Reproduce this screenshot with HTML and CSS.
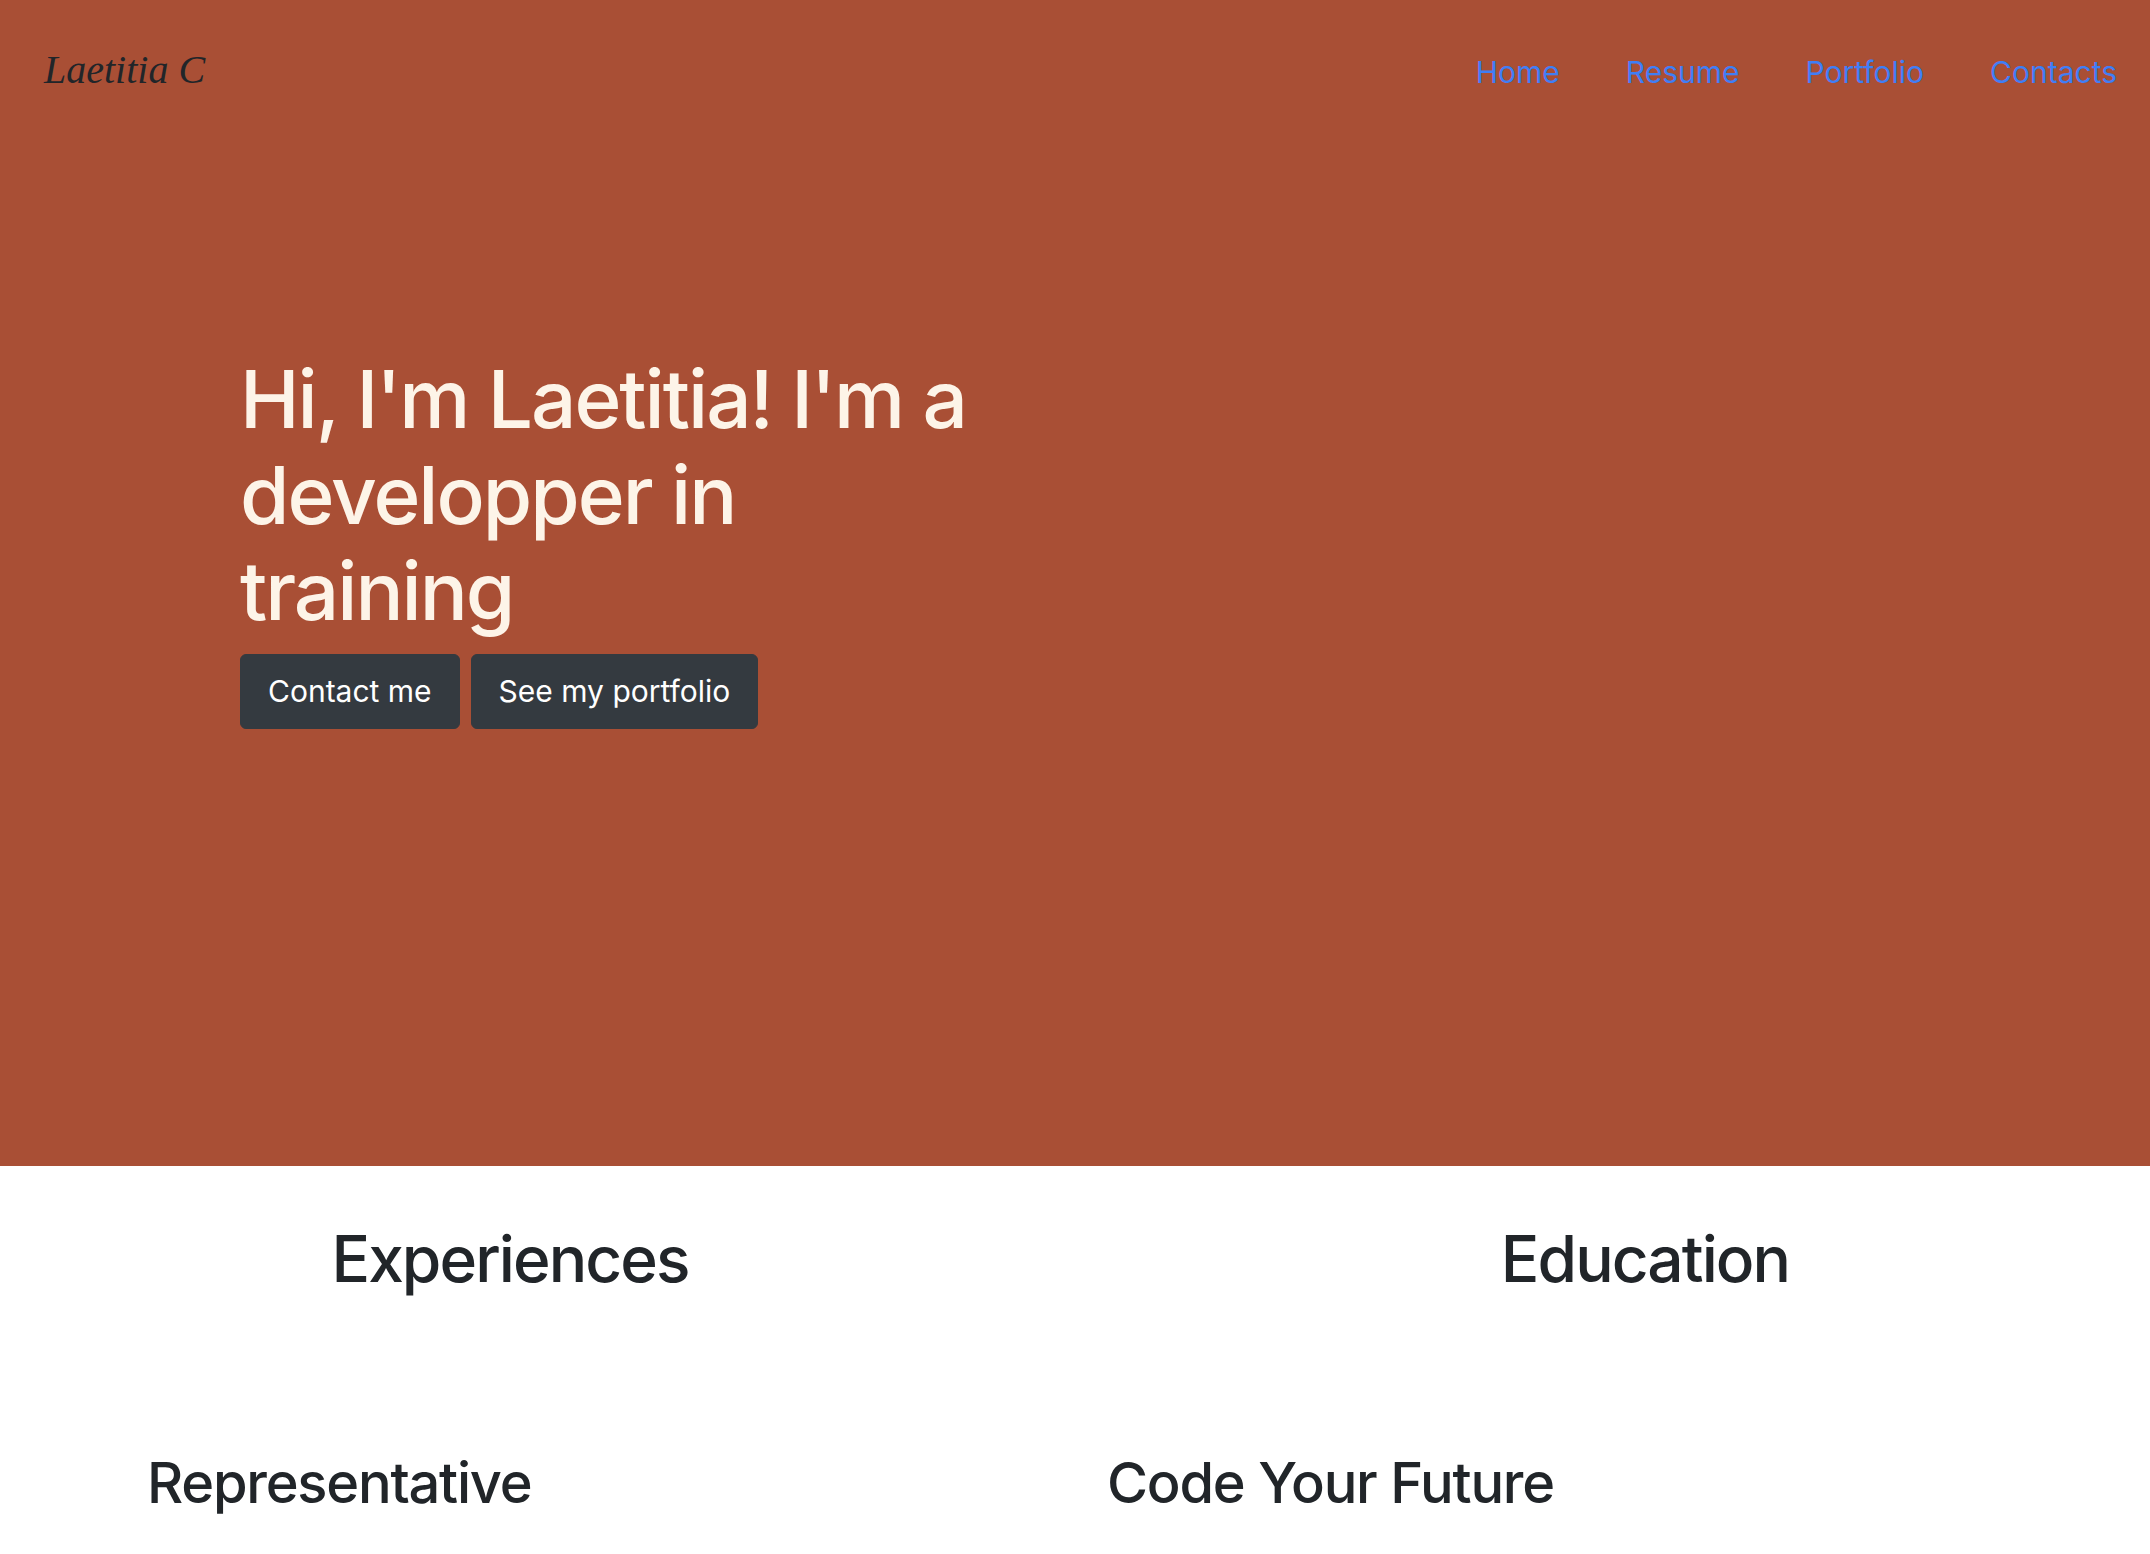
FILE: index.html
```html
<!DOCTYPE html>
<html lang="en">
<head>
<meta charset="utf-8">
<title>Laetitia C</title>
<link rel="stylesheet" href="styles.css">
</head>
<body>
<header class="hero">
  <nav class="navbar">
    <a class="brand" href="#">Laetitia C</a>
    <ul class="nav-links">
      <li><a href="#">Home</a></li>
      <li><a href="#">Resume</a></li>
      <li><a href="#">Portfolio</a></li>
      <li><a href="#">Contacts</a></li>
    </ul>
  </nav>
  <div class="hero-body">
    <h1 class="hero-title">Hi, I'm Laetitia! I'm a developper in training</h1>
    <div class="hero-actions">
      <a class="btn" href="#">Contact me</a>
      <a class="btn" href="#">See my portfolio</a>
    </div>
  </div>
</header>
<main class="resume">
  <div class="titles">
    <h2 class="section-title left">Experiences</h2>
    <h2 class="section-title right">Education</h2>
  </div>
  <div class="entries">
    <h3 class="entry-title left">Representative</h3>
    <h3 class="entry-title right">Code Your Future</h3>
  </div>
</main>
</body>
</html>
```
FILE: styles.css
```css
* { box-sizing: border-box; }
html, body { margin: 0; padding: 0; }
body {
  font-family: Inter, "Noto Sans", sans-serif;
  color: #212529;
  background: #ffffff;
  overflow: hidden;
}
.hero {
  background: #a94f35;
  height: 1166px;
}
.navbar {
  display: flex;
  align-items: baseline;
  justify-content: space-between;
  padding: 40px 0 0 44px;
}
.brand {
  font-family: "Liberation Serif", "DejaVu Serif", serif;
  font-style: italic;
  font-size: 40px;
  line-height: 60px;
  color: #212529;
  text-decoration: none;
}
.nav-links {
  display: flex;
  list-style: none;
  margin: 0;
  padding: 0;
}
.nav-links a {
  display: block;
  padding: 0 33px;
  font-size: 30px;
  line-height: 45px;
  color: #3f7ef6;
  text-decoration: none;
}
.hero-body {
  padding: 251px 0 0 240px;
}
.hero-title {
  margin: 0 0 15px;
  max-width: 760px;
  font-size: 80px;
  line-height: 1.2;
  font-weight: 500;
  letter-spacing: -0.025em;
  color: #fdf4e8;
}
.hero-actions {
  display: flex;
  gap: 11px;
}
.btn {
  display: inline-block;
  padding: 14px 27px 14px 27px;
  border: 1px solid #343a40;
  border-radius: 6px;
  background: #343a40;
  color: #ffffff;
  font-size: 30px;
  line-height: 45px;
  text-decoration: none;
}
.titles, .entries {
  display: grid;
  grid-template-columns: 1fr 1fr;
}
.titles { padding-top: 55px; }
.section-title {
  margin: 0;
  font-size: 64px;
  line-height: 1.2;
  font-weight: 500;
  letter-spacing: -0.03em;
  text-align: center;
}
.section-title.left { padding-right: 55px; }
.section-title.right { padding-left: 65px; }
.entries { padding-top: 152px; }
.entry-title {
  margin: 0;
  font-size: 56px;
  line-height: 1.2;
  font-weight: 500;
  letter-spacing: -0.022em;
}
.entry-title.left { padding-left: 147px; }
.entry-title.right { padding-left: 32px; }
```
